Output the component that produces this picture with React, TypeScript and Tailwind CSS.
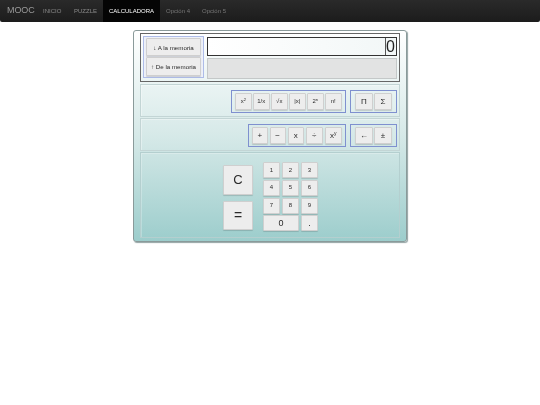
const sans = "font-['Liberation_Sans',Arial,sans-serif]";

function Btn({ children, cls }: { children: React.ReactNode; cls: string }) {
  return (
    <div className={"flex items-center justify-center bg-[#ededed] border border-[#c9d0d0] rounded-[1px] shadow-[0_1px_1px_rgba(0,0,0,0.15)] text-[#2a2a2a] grayscale blur-[0.3px] " + cls}>
      {children}
    </div>
  );
}

function Group({ children, cls }: { children: React.ReactNode; cls: string }) {
  return <div className={"flex border border-[#7f90cf] " + cls}>{children}</div>;
}

const Sm = ({ children }: { children: React.ReactNode }) => (
  <Btn cls="w-[16.5px] h-[17.5px] text-[6px]">{children}</Btn>
);
const Md = ({ children, w }: { children: React.ReactNode; w: string }) => (
  <Btn cls={"h-[17.5px] text-[8px] " + w}>{children}</Btn>
);
const Wd = ({ children }: { children: React.ReactNode }) => (
  <Btn cls="w-[17.5px] h-[17.5px] text-[8px]">{children}</Btn>
);
const Num = ({ children, cls = "w-[17px]" }: { children: React.ReactNode; cls?: string }) => (
  <Btn cls={"h-[16px] text-[6px] " + cls}>{children}</Btn>
);

const rowCls =
  "h-[33px] border border-[#c3d5d5] shadow-[inset_1px_1px_0_rgba(255,255,255,0.35)] flex justify-end items-end gap-[4px] pr-[2px] pb-[3px]";

export default function App() {
  return (
    <div className={"w-[540px] h-[405px] bg-white overflow-hidden " + sans}>
      <nav className="h-[22px] bg-gradient-to-b from-[#2a2a2a] to-[#1c1c1c] rounded-b-[2px] flex items-stretch text-[6px] text-[#8a8a8a] grayscale blur-[0.3px]">
        <div className="w-[43px] pl-[7px] flex items-center text-[9px] tracking-[-0.1px] text-[#999]">MOOC</div>
        <div className="w-[31px] flex items-center">INICIO</div>
        <div className="w-[29px] flex items-center">PUZZLE</div>
        <div className="w-[57px] bg-[#050505] text-white flex items-center justify-center">CALCULADORA</div>
        <div className="w-[36px] pl-[6px] flex items-center text-[#777]">Opción 4</div>
        <div className="pl-[6px] flex items-center text-[#777]">Opción 5</div>
      </nav>

      <div className="mt-[8px] ml-[133px] w-[274px] h-[212px] border border-[#8a9a9a] rounded-[3px] bg-gradient-to-b from-white via-[#d6e9e8] to-[#9ccdcc] shadow-[1px_1px_1px_rgba(60,90,90,0.55)] px-[6px] pt-[2px] flex flex-col">
        <div className="h-[49px] border border-[#666] flex items-start pl-[2px] pr-[2px] pt-[2px] gap-[3px]">
          <Group cls="w-[61px] h-[42px] flex-col items-center justify-center gap-[1px] border-[#aebce8] bg-[#eef1f8]">
            <Btn cls="w-[55px] h-[18px] text-[6.2px]">↓ A la memoria</Btn>
            <Btn cls="w-[55px] h-[18.5px] text-[6.2px]">↑ De la memoria</Btn>
          </Group>
          <div className="flex-1 flex flex-col gap-[2px] pt-[1px]">
            <div className="h-[19px] border border-[#333] bg-gradient-to-r from-white to-[#f2f7f7] flex justify-end items-stretch text-[16px] leading-none text-[#222] pr-[1px]">
              <span className="border-l border-[#555] w-[10px] flex items-center grayscale">0</span>
            </div>
            <div className="h-[21px] border border-[#c4c8c8] bg-[#e2e3e3]" />
          </div>
        </div>

        <div className={rowCls + " mt-[2px]"}>
          <Group cls="w-[115px] h-[23px] items-center pl-[3px] gap-[1.5px]">
            <Sm><span>x<sup className="text-[4px]">2</sup></span></Sm>
            <Sm>1/x</Sm>
            <Sm>√x</Sm>
            <Sm>|x|</Sm>
            <Sm><span>2<sup className="text-[4px]">n</sup></span></Sm>
            <Sm>n!</Sm>
          </Group>
          <Group cls="w-[47px] h-[23px] items-center justify-center gap-[1.5px]">
            <Wd>Π</Wd>
            <Wd>Σ</Wd>
          </Group>
        </div>

        <div className={rowCls + " mt-[1px]"}>
          <Group cls="w-[98px] h-[23px] items-center pl-[3px] gap-[2px]">
            <Md w="w-[15.5px]">+</Md>
            <Md w="w-[16px]">−</Md>
            <Md w="w-[16.5px]">x</Md>
            <Md w="w-[16.5px]">÷</Md>
            <Md w="w-[17.5px]"><span>x<sup className="text-[5px]">y</sup></span></Md>
          </Group>
          <Group cls="w-[47px] h-[23px] items-center justify-center gap-[1.5px]">
            <Wd>←</Wd>
            <Wd>±</Wd>
          </Group>
        </div>

        <div className="mt-[1px] h-[86px] border border-[#b4cfcf] shadow-[inset_1px_1px_0_rgba(255,255,255,0.25)] flex pl-[82px] pt-[9px] gap-[10px]">
          <div className="flex flex-col gap-[6px] pt-[3px]">
            <Btn cls="w-[30px] h-[29.5px] text-[13px]">C</Btn>
            <Btn cls="w-[30px] h-[29.5px] text-[14px]">=</Btn>
          </div>
          <div className="grid grid-cols-[17px_17px_17px] gap-x-[2px] gap-y-[1.75px] h-fit">
            <Num>1</Num>
            <Num>2</Num>
            <Num>3</Num>
            <Num>4</Num>
            <Num>5</Num>
            <Num>6</Num>
            <Num>7</Num>
            <Num>8</Num>
            <Num>9</Num>
            <Num cls="col-span-2 text-[9px] w-full">0</Num>
            <Num cls="text-[9px]">.</Num>
          </div>
        </div>
      </div>
    </div>
  );
}
